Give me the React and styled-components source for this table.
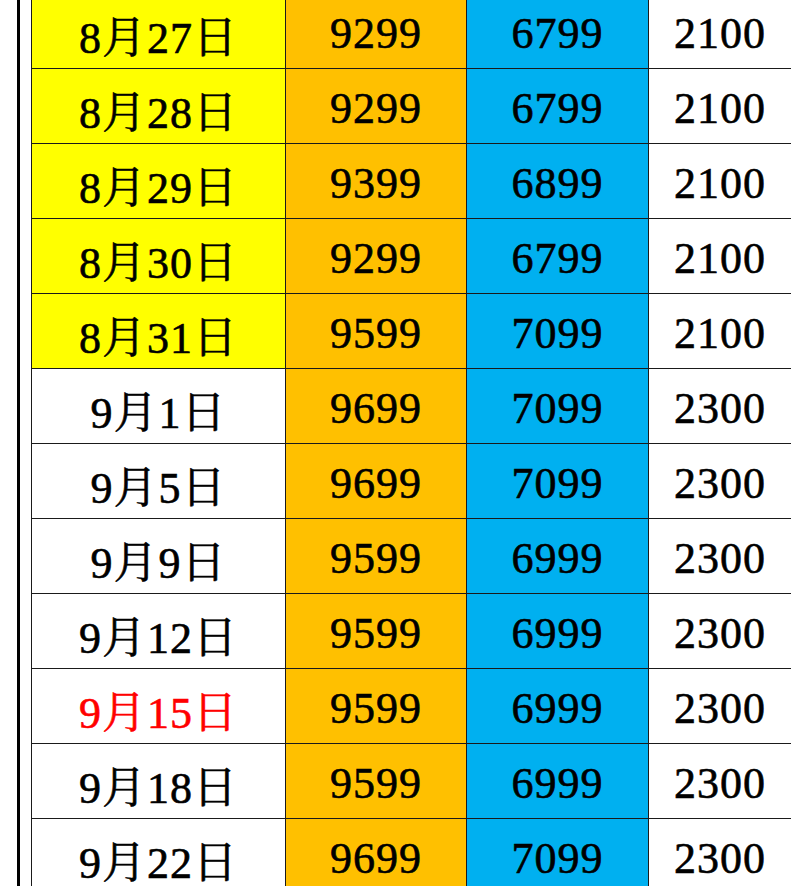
import React from "react";
import styled, { createGlobalStyle } from "styled-components";

const Global = createGlobalStyle`
  html, body { margin: 0; padding: 0; background: #ffffff; }
  body { overflow: hidden; }
`;

const Page = styled.div`
  display: flex;
  height: 886px;
  overflow: hidden;
  background: #ffffff;
`;

const Rule = styled.div`
  width: 3px;
  margin-left: 17px;
  background: #000000;
  flex: none;
`;

const Grid = styled.div`
  margin-left: 11px;
  margin-top: -6px;
  flex: 1;
  display: grid;
  grid-template-columns: 254px 181px 182px 1fr;
  grid-auto-rows: 75px;
  align-self: flex-start;
`;

const bg = {
  yellow: "#ffff00",
  orange: "#ffc000",
  blue: "#00b0f0",
  white: "#ffffff",
};

const Cell = styled.div`
  display: flex;
  align-items: center;
  justify-content: center;
  padding-top: 5px;
  box-sizing: border-box;
  background: ${(p) => bg[p.$tone]};
  color: ${(p) => (p.$red ? "#ff0000" : "#000000")};
  border-left: 1px solid #1a1a1a;
  border-bottom: 1px solid #1a1a1a;
  font-family: "Liberation Serif", "Noto Serif CJK JP", "Noto Sans CJK JP", serif;
  font-size: 44px;
  letter-spacing: 1px;
  -webkit-text-stroke: 0.6px currentColor;
  white-space: nowrap;
`;

const rows = [
  ["8月27日", "9299", "6799", "2100", true],
  ["8月28日", "9299", "6799", "2100", true],
  ["8月29日", "9399", "6899", "2100", true],
  ["8月30日", "9299", "6799", "2100", true],
  ["8月31日", "9599", "7099", "2100", true],
  ["9月1日", "9699", "7099", "2300", false],
  ["9月5日", "9699", "7099", "2300", false],
  ["9月9日", "9599", "6999", "2300", false],
  ["9月12日", "9599", "6999", "2300", false],
  ["9月15日", "9599", "6999", "2300", false, true],
  ["9月18日", "9599", "6999", "2300", false],
  ["9月22日", "9699", "7099", "2300", false],
];

export default function App() {
  return (
    <>
      <Global />
      <Page>
        <Rule />
        <Grid>
          {rows.map(([d, a, b, c, hi, red], i) => (
            <React.Fragment key={i}>
              <Cell $tone={hi ? "yellow" : "white"} $red={red}>{d}</Cell>
              <Cell $tone="orange">{a}</Cell>
              <Cell $tone="blue">{b}</Cell>
              <Cell $tone="white">{c}</Cell>
            </React.Fragment>
          ))}
        </Grid>
      </Page>
    </>
  );
}
